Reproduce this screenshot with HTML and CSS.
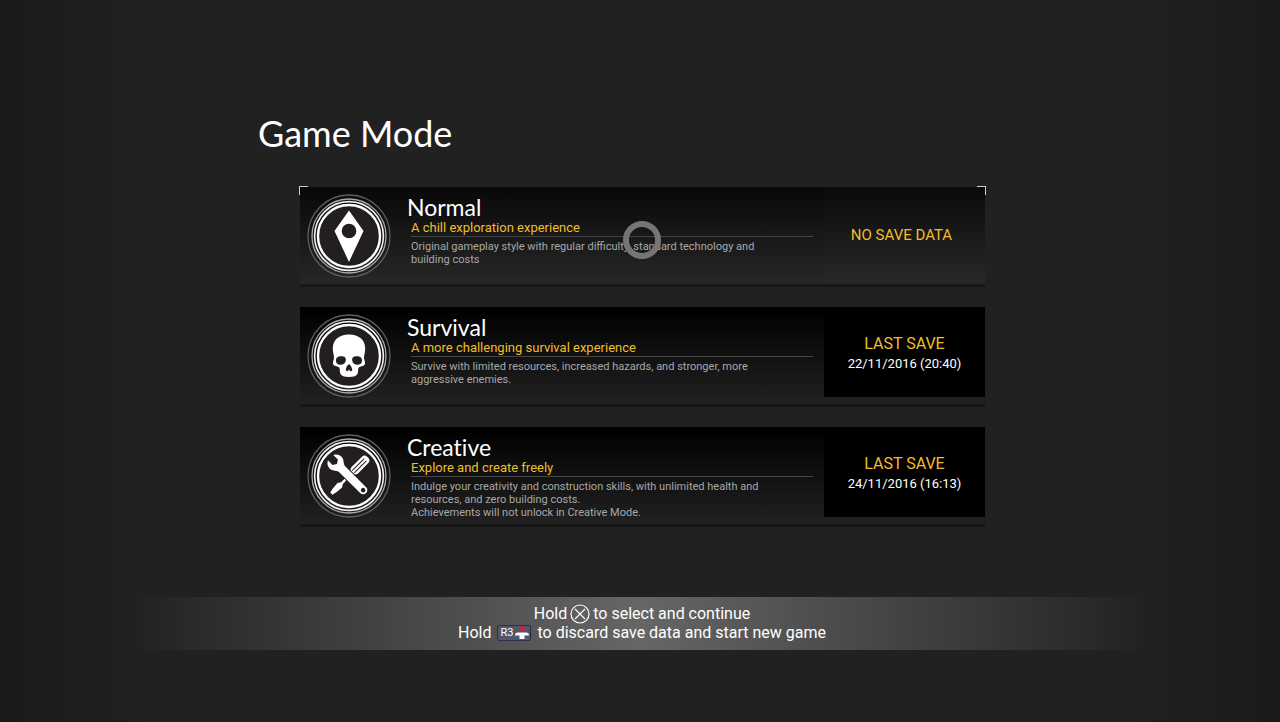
FILE: index.html
```html
<!DOCTYPE html>
<html lang="en">
<head>
    <meta charset="UTF-8">
    <meta name="viewport" content="width=device-width, initial-scale=1.0">
    <title>Game Mode</title>
    <link rel="stylesheet" href="styles.css">
</head>
<body>
    <main class="screen">
        <h1 class="title">Game Mode</h1>

        <div class="modes">
            <button class="mode selected" type="button">
                <svg class="emblem" viewBox="-42 -42 84 84" aria-hidden="true">
                    <circle class="ring-outer" r="41"/>
                    <circle class="ring-mid" r="37"/>
                    <circle class="ring-inner" r="34.4"/>
                    <circle class="disc" r="31"/>
                    <path class="glyph" fill-rule="evenodd" d="M0-25.5 14.5-5 0 26-14.5-5ZM0-12.3a7.3 7.3 0 1 0 0 14.6a7.3 7.3 0 1 0 0-14.6Z"/>
                </svg>
                <span class="info">
                    <span class="name">Normal</span>
                    <span class="tagline">A chill exploration experience</span>
                    <span class="details">Original gameplay style with regular difficulty, standard technology and building costs</span>
                </span>
                <span class="save empty">
                    <span class="save-none">NO SAVE DATA</span>
                </span>
            </button>

            <button class="mode" type="button">
                <svg class="emblem" viewBox="-42 -42 84 84" aria-hidden="true">
                    <circle class="ring-outer" r="41"/>
                    <circle class="ring-mid" r="37"/>
                    <circle class="ring-inner" r="34.4"/>
                    <circle class="disc" r="31"/>
                    <path class="glyph" d="M0-21.5C-10-21.5-16.2-16-16.2-7.5C-16.2-3-14.8-.5-15 2C-15.2 4-16.2 5.5-16 7.5C-15.7 10.5-11.5 10-9.8 11.5C-8.6 13-9.8 16.5-8 18.5C-6.5 20.3-4 21 0 21C4 21 6.5 20.3 8 18.5C9.8 16.5 8.6 13 9.8 11.5C11.5 10 15.7 10.5 16 7.5C16.2 5.5 15.2 4 15 2C14.8-.5 16.2-3 16.2-7.5C16.2-16 10-21.5 0-21.5Z"/>
                    <path class="hole" d="M-13 5C-13.3 1.5-10.5.2-7.5.3C-4.5.3-2.7 1.8-3.2 4.5C-3.7 7.5-6 8.8-8.5 8.7C-11.3 8.7-12.8 7.5-13 5ZM13 5C13.3 1.5 10.5.2 7.5.3C4.5.3 2.7 1.8 3.2 4.5C3.7 7.5 6 8.8 8.5 8.7C11.3 8.7 12.8 7.5 13 5ZM0 8.2C1.5 8.2 3.3 12.5 3.2 14C3.1 15.5 1 15.5.5 14.3L0 13.5-.5 14.3C-1 15.5-3.1 15.5-3.2 14C-3.3 12.5-1.5 8.2 0 8.2Z"/>
                </svg>
                <span class="info">
                    <span class="name">Survival</span>
                    <span class="tagline">A more challenging survival experience</span>
                    <span class="details">Survive with limited resources, increased hazards, and stronger, more aggressive enemies.</span>
                </span>
                <span class="save">
                    <span class="save-label">LAST SAVE</span>
                    <span class="save-date">22/11/2016 (20:40)</span>
                </span>
            </button>

            <button class="mode" type="button">
                <svg class="emblem" viewBox="-42 -42 84 84" aria-hidden="true">
                    <circle class="ring-outer" r="41"/>
                    <circle class="ring-mid" r="37"/>
                    <circle class="ring-inner" r="34.4"/>
                    <circle class="disc" r="31"/>
                    <!-- screwdriver -->
                    <g transform="rotate(45)">
                        <rect class="glyph" x="-4.5" y="-26.5" width="9" height="22" rx="4"/>
                        <path class="groove" d="M-1.5-23V-6M1.5-23V-6"/>
                        <path class="glyph" d="M-1.2-6H1.2V10L3.2 13 2.6 20 1.5 25H-1.5L-2.6 20-3.2 13-1.2 10Z"/>
                    </g>
                    <!-- wrench -->
                    <g transform="rotate(-45)">
                        <path class="wrench" d="M-3.8-26C-7.8-24-8.8-20.5-8.2-17.5C-7.6-14.5-4.6-13-4.2-10V20A4.2 4.2 0 0 0 4.2 20V-10C4.6-13 7.6-14.5 8.2-17.5C8.8-20.5 7.8-24 3.8-26V-19.5L0-17-3.8-19.5Z"/>
                        <circle class="hole" cy="20" r="2.3"/>
                    </g>
                </svg>
                <span class="info">
                    <span class="name">Creative</span>
                    <span class="tagline">Explore and create freely</span>
                    <span class="details">Indulge your creativity and construction skills, with unlimited health and resources, and zero building costs.<br>Achievements will not unlock in Creative Mode.</span>
                </span>
                <span class="save">
                    <span class="save-label">LAST SAVE</span>
                    <span class="save-date">24/11/2016 (16:13)</span>
                </span>
            </button>

            <span class="cursor"></span>
        </div>
    </main>

    <footer class="hints">
        <p class="hint">
            Hold
            <svg class="cross" viewBox="0 0 20 20" role="img" aria-label="Cross">
                <circle cx="10" cy="10" r="9"/>
                <path d="M5 5 15 15M15 5 5 15"/>
            </svg>
            to select and continue
        </p>
        <p class="hint wide">
            Hold
            <span class="key">R3
                <svg class="stick" viewBox="0 0 14 14" aria-hidden="true">
                    <path class="pad" d="M0 9.5Q0 6.5 3 6.5H11Q14 6.5 14 9.5H9.5V13H4.5V9.5Z"/>
                    <path class="arrow" d="M5.8 0H8.2V1.5H9.8V3.5L7 6 4.2 3.5V1.5H5.8Z"/>
                </svg>
            </span>
            to discard save data and start new game
        </p>
    </footer>
</body>
</html>
```
FILE: styles.css
```css
* {
    margin: 0;
    padding: 0;
    box-sizing: border-box;
}

body {
    min-height: 100vh;
    background: linear-gradient(90deg, #1a1a1a, #212121 12%, #212121 88%, #1a1a1a);
    color: #fff;
    font-family: Roboto, sans-serif;
}

.screen {
    max-width: 764px;
    margin: 0 auto;
    padding-top: 109px;
}

.title {
    font-family: Lato, sans-serif;
    font-size: 36px;
    font-weight: 400;
    line-height: 48px;
}

.modes {
    position: relative;
    display: flex;
    flex-direction: column;
    gap: 20px;
    margin: 30px 37px 0 42px;
}

.mode {
    position: relative;
    display: flex;
    align-items: flex-start;
    width: 100%;
    min-height: 100px;
    border: none;
    border-bottom: 3px solid #171717;
    background: linear-gradient(#000, #212121);
    color: inherit;
    font: inherit;
    text-align: left;
    cursor: pointer;
}

.mode.selected {
    background: linear-gradient(#080808, #272727);
}

/* corner brackets of the focused card */
.mode.selected::before,
.mode.selected::after {
    content: '';
    position: absolute;
    top: -1px;
    width: 8px;
    height: 8px;
    border-top: 1px solid #ccc;
}

.mode.selected::before {
    left: -1px;
    border-left: 1px solid #ccc;
}

.mode.selected::after {
    right: -1px;
    border-right: 1px solid #ccc;
}

.emblem {
    flex: none;
    width: 84px;
    height: 84px;
    margin: 7px 0 0 7px;
}

.ring-outer,
.ring-mid,
.ring-inner {
    fill: none;
    stroke: #5e5e5e;
    stroke-width: 1.3;
}

.ring-mid {
    stroke: #aaa;
}

.ring-inner {
    stroke: #eee;
    stroke-width: 1.6;
}

.disc {
    fill: #231f20;
    stroke: #fff;
    stroke-width: 2.4;
}

.glyph {
    fill: #fff;
}

.hole {
    fill: #231f20;
}

.groove {
    fill: none;
    stroke: #231f20;
}

.wrench {
    fill: #fff;
    stroke: #231f20;
    stroke-width: 2;
    paint-order: stroke;
}

.info {
    flex: 1;
    display: flex;
    flex-direction: column;
    margin: 7px 11px 0 20px;
}

.name {
    margin-left: -4px;
    font-family: Lato, sans-serif;
    font-size: 23px;
    font-variant-ligatures: none;
    line-height: 26px;
}

.tagline {
    padding-bottom: 1px;
    border-bottom: 1px solid #444;
    color: #f3bd28;
    font-size: 13px;
    line-height: 15px;
}

.details {
    max-width: 370px;
    padding-top: 3px;
    color: #a8a8a8;
    font-size: 11px;
    line-height: 13px;
}

.save {
    flex: none;
    display: flex;
    flex-direction: column;
    align-items: center;
    justify-content: center;
    width: 161px;
    height: 90px;
    padding-top: 4px;
    background: #000;
}

.save.empty {
    height: 97px;
    padding: 0 6px 2px 0;
    background: linear-gradient(#0a0a0a, #282828);
}

.save-none,
.save-label {
    color: #f3bd28;
    font-size: 15px;
    line-height: 20px;
}

.save-label {
    font-size: 16px;
}

.save-date {
    font-size: 13px;
    line-height: 20px;
}

.cursor {
    position: absolute;
    top: 34px;
    left: 50%;
    width: 38px;
    height: 38px;
    margin-left: -20px;
    border: 6px solid #757575;
    border-radius: 50%;
    pointer-events: none;
}

.hints {
    margin-top: 70px;
    padding: 7px 0 8px 4px;
    background: linear-gradient(90deg, transparent 10%, #666 50%, transparent 90%);
    font-size: 16px;
    line-height: 19px;
}

.hint {
    display: flex;
    align-items: center;
    justify-content: center;
    gap: 3px;
    height: 19px;
}

.hint.wide {
    gap: 6px;
}

.cross {
    width: 20px;
    height: 20px;
    fill: none;
    stroke: #fff;
    stroke-width: 1.2;
}

.key {
    display: flex;
    align-items: center;
    gap: 2px;
    width: 34px;
    height: 16px;
    padding: 0 2px;
    border: 1px solid #2c3044;
    border-radius: 2px;
    background: #50566e;
    font-size: 11px;
    line-height: 14px;
}

.stick {
    flex: none;
    width: 14px;
    height: 14px;
}

.arrow {
    fill: #d3202f;
}

.pad {
    fill: #fff;
}
```
